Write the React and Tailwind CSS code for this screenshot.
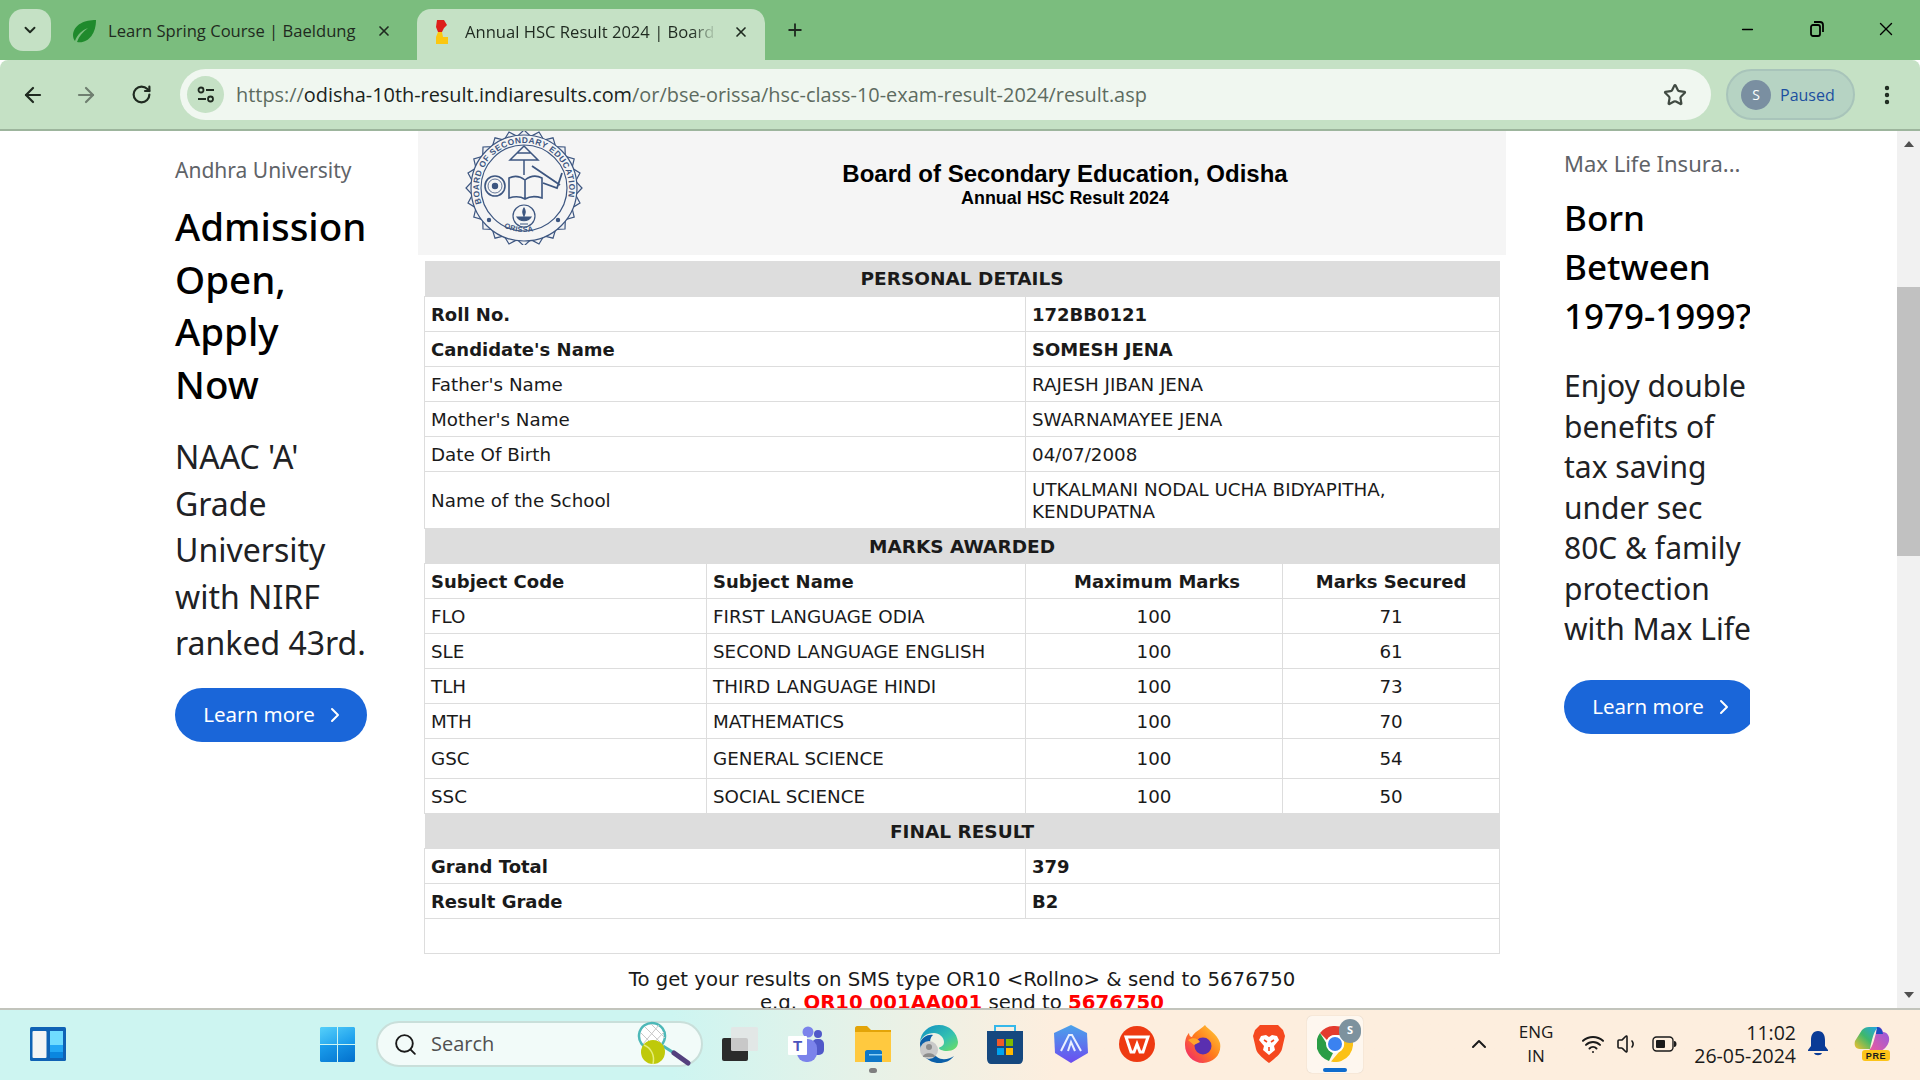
import { ChevronDown, ChevronRight, ChevronUp, X, Plus, ArrowLeft, ArrowRight, RotateCw, Star, MoreVertical, Minus, Search, Wifi, Volume1 } from 'lucide-react';

const personal = [
  { label: 'Roll No.', value: '172BB0121', bold: true },
  { label: "Candidate's Name", value: 'SOMESH JENA', bold: true },
  { label: "Father's Name", value: 'RAJESH JIBAN JENA' },
  { label: "Mother's Name", value: 'SWARNAMAYEE JENA' },
  { label: 'Date Of Birth', value: '04/07/2008' },
];

const marks = [
  { code: 'FLO', name: 'FIRST LANGUAGE ODIA', secured: 71, h: 'h-[35px]' },
  { code: 'SLE', name: 'SECOND LANGUAGE ENGLISH', secured: 61, h: 'h-[35px]' },
  { code: 'TLH', name: 'THIRD LANGUAGE HINDI', secured: 73, h: 'h-[35px]' },
  { code: 'MTH', name: 'MATHEMATICS', secured: 70, h: 'h-[35px]' },
  { code: 'GSC', name: 'GENERAL SCIENCE', secured: 54, h: 'h-[40px]' },
  { code: 'SSC', name: 'SOCIAL SCIENCE', secured: 50, h: 'h-[35px]' },
];

const cell = 'border border-[#dddddd] px-[6px] py-0 pt-[1px]';
const plainCell = 'border border-[#dddddd] px-[6px] py-0 pt-[2px]';

function SectionRow({ children }) {
  return (
    <tr className="h-[35px] bg-[#dddddd]">
      <td colSpan={4} className="p-0 pt-[2px] text-center text-[18.5px] font-bold">{children}</td>
    </tr>
  );
}

// seal drawn from the logo in the header
function Seal() {
  const points = [];
  for (let i = 0; i < 48; i++) {
    const r = i % 2 === 0 ? 58 : 52;
    const a = (i / 48) * Math.PI * 2;
    points.push(`${(59 + r * Math.cos(a)).toFixed(1)},${(57 + r * Math.sin(a)).toFixed(1)}`);
  }
  return (
    <svg width="118" height="114" viewBox="0 0 118 114" fill="none" stroke="#3d5680" strokeWidth="1.2">
      <polygon points={points.join(' ')} fill="#f1f2f4" />
      <circle cx="59" cy="57" r="53" fill="#f5f5f5" />
      <circle cx="59" cy="57" r="43" fill="#f5f5f5" />
      <defs>
        <path id="sealTop" d="M16.7 72.4 A45 45 0 1 1 101.3 72.4" />
        <path id="sealBottom" d="M38 96 A46 46 0 0 0 80 96" />
      </defs>
      <text fontSize="8.4" fontFamily="Liberation Sans, sans-serif" fontWeight="700" fill="#3d5680" stroke="none" letterSpacing="0.5">
        <textPath href="#sealTop" startOffset="0%">BOARD OF SECONDARY EDUCATION</textPath>
      </text>
      <text fontSize="7.5" fontFamily="Liberation Sans, sans-serif" fontWeight="700" fill="#3d5680" stroke="none" letterSpacing="0.3">
        <textPath href="#sealBottom" startOffset="2%">ORISSA</textPath>
      </text>
      <path d="M45 29 L59 15 L73 29 Z M52 22 H66 M59 29 V44" strokeWidth="1.5" />
      <path d="M44 67 V47 C50 44 55 45 60 49 C65 45 71 44 77 47 V67 C71 65 65 65 60 68 C55 65 50 65 44 67 Z M60 49 V68" strokeWidth="1.6" />
      <path d="M67 35 L95 54 M78 52 L92 57 L97 42" strokeWidth="1.8" />
      <circle cx="30" cy="55" r="10" strokeWidth="1.6" />
      <circle cx="30" cy="55" r="7" strokeWidth="0.8" />
      <circle cx="30" cy="55" r="2.6" fill="#3d5680" />
      <circle cx="59" cy="85" r="11" />
      <path d="M52 86 C55 91 63 91 66 86 Z M59 77 C61 80 60 83 59 85 C58 83 57 80 59 77 Z M55 93 H63" fill="#3d5680" />
      <circle cx="24" cy="89" r="1.6" fill="#3d5680" />
      <circle cx="93" cy="89" r="1.6" fill="#3d5680" />
    </svg>
  );
}

function LeafIcon() {
  return (
    <svg width="26" height="24" viewBox="0 0 26 24">
      <path d="M25 1 C14 1 3 5 2 16 C2 19 3 21 4 22 C6 16 11 11 17 9 C12 13 8 17 6 23 C17 25 25 15 25 1 Z" fill="#1f8a2c" />
    </svg>
  );
}

function FlagIcon() {
  return (
    <svg width="16" height="26" viewBox="0 0 16 26">
      <path d="M4 1 H11 L14 6 L11 9 L9 13 H5 L3 8 Z" fill="#dd1f1a" />
      <path d="M5 13 H9 L10 18 H15 V25 H3 V18 Z" fill="#fbc711" />
    </svg>
  );
}

function ChromeTabs() {
  return (
    <div className="flex h-[60px] bg-[#7bbd7e] text-[#1f2a20]">
      <div className="ml-[9px] mt-[9px] flex h-[42px] w-[42px] items-center justify-center rounded-[14px] bg-[#c5e1c5]">
        <ChevronDown size={18} strokeWidth={2.5} />
      </div>
      <div className="ml-[20px] flex h-[60px] w-[346px] items-center pt-[2px]">
        <LeafIcon />
        <span className="ml-[11px] w-[268px] whitespace-nowrap text-[16.6px]">Learn Spring Course | Baeldung</span>
        <X size={16} strokeWidth={2.5} />
      </div>
      <div className="mt-[9px] flex h-[51px] w-[348px] items-center rounded-t-[14px] bg-[#c5e1c5] pb-[5px] pl-[16px]">
        <FlagIcon />
        <span className="ml-[16px] w-[252px] overflow-hidden whitespace-nowrap text-[16.6px] [mask-image:linear-gradient(to_right,black_90%,transparent)]">Annual HSC Result 2024 | Board of Secondary</span>
        <X size={16} strokeWidth={2.5} className="ml-[16px]" />
      </div>
      <div className="ml-[20px] flex items-center">
        <Plus size={20} strokeWidth={2.2} />
      </div>
      <div className="ml-auto flex items-center pb-[2px] text-black">
        <div className="flex w-[69px] justify-center"><Minus size={17} strokeWidth={1.8} /></div>
        <div className="flex w-[69px] justify-center">
          <svg width="16" height="16" viewBox="0 0 16 16" fill="none" stroke="black" strokeWidth="1.8">
            <rect x="2" y="4" width="9" height="11" rx="2" />
            <path d="M5 1 H11 C13 1 14 2 14 4 V11" />
          </svg>
        </div>
        <div className="flex w-[69px] justify-center"><X size={22} strokeWidth={1.5} /></div>
      </div>
    </div>
  );
}

function AddressBar() {
  return (
    <div className="h-[71px] rounded-t-[8px] border-b-[2px] border-[#9db59d] bg-[#c5e1c5]">
      <div className="flex h-[69px] items-center text-[#1f2a20]">
        <div className="flex w-[180px] shrink-0 items-center">
          <div className="flex w-[66px] justify-center"><ArrowLeft size={24} strokeWidth={2.2} /></div>
          <div className="flex w-[40px] justify-center text-[#6f7f70]"><ArrowRight size={24} strokeWidth={2.2} /></div>
          <div className="flex w-[70px] justify-center"><RotateCw size={21} strokeWidth={2.5} /></div>
        </div>
        <div className="flex h-[51px] w-[1531px] items-center rounded-full bg-[#f0f7f0] pl-[7px]">
          <div className="flex h-[37px] w-[37px] items-center justify-center rounded-full bg-[#c5e1c5]">
            <svg width="20" height="20" viewBox="0 0 20 20" fill="none" stroke="#1f2a20" strokeWidth="1.8">
              <circle cx="5" cy="5" r="2.5" />
              <path d="M10 5 H18 M2 14 H10" />
              <circle cx="14.5" cy="14" r="2.5" />
            </svg>
          </div>
          <div className="ml-[12px] whitespace-nowrap text-[19.9px] text-[#5d6b60]">
            https://<span className="text-[#1a231c]">odisha-10th-result.indiaresults.com</span>/or/bse-orissa/hsc-class-10-exam-result-2024/result.asp
          </div>
          <div className="ml-auto mr-[24px] text-[#404a42]"><Star size={24} strokeWidth={2.2} /></div>
        </div>
        <div className="ml-[15px] flex h-[51px] w-[129px] items-center rounded-full border-[2px] border-[#a8c4ba] bg-[#b6d3c3] pl-[13px]">
          <div className="flex h-[30px] w-[30px] items-center justify-center rounded-full bg-[#7a8fa1] text-[14px] text-white">S</div>
          <span className="ml-[9px] text-[16px] text-[#1c4fa0]">Paused</span>
        </div>
        <div className="ml-[20px]"><MoreVertical size={24} strokeWidth={2.4} /></div>
      </div>
    </div>
  );
}

function LearnMore({ className }) {
  return (
    <div className={`flex h-[54px] items-center justify-center gap-[8px] rounded-full bg-[#1a66d9] pl-[8px] text-[20.5px] text-white ${className}`}>
      Learn more
      <ChevronRight size={24} strokeWidth={2} />
    </div>
  );
}

function LeftAd() {
  return (
    <div className="w-[418px] shrink-0 pl-[175px] pr-[40px] font-['Noto_Sans',sans-serif] text-[#202124]">
      <div className="mt-[22px] whitespace-nowrap text-[21px] leading-[34px] text-[#5f6368]">Andhra University</div>
      <div className="mt-[13px] text-[38.5px] font-medium leading-[52.5px] text-black">Admission<br />Open,<br />Apply<br />Now</div>
      <div className="mt-[24px] text-[32px] leading-[46.5px]">NAAC 'A'<br />Grade<br />University<br />with NIRF<br />ranked 43rd.</div>
      <LearnMore className="mt-[21px] w-[192px]" />
    </div>
  );
}

function RightAd() {
  return (
    <div className="w-[391px] shrink-0 pl-[58px] font-['Noto_Sans',sans-serif] text-[#202124]">
      <div className="w-[186px] overflow-hidden">
        <div className="w-[240px]">
          <div className="mt-[16px] text-[22px] leading-[32px] text-[#5f6368]">Max Life Insura...</div>
          <div className="mt-[14px] text-[35px] font-medium leading-[49px] text-black">Born<br />Between<br />1979-1999?</div>
          <div className="mt-[26px] text-[30px] leading-[40.5px]">Enjoy double<br />benefits of<br />tax saving<br />under sec<br />80C & family<br />protection<br />with Max Life</div>
          <LearnMore className="mt-[30px] w-[192px]" />
        </div>
      </div>
    </div>
  );
}

function ResultSheet() {
  return (
    <div className="h-full w-[1088px] shrink-0 overflow-hidden">
      <div className="flex h-[124px] items-start bg-[#f5f5f5]">
        <div className="ml-[47px] shrink-0"><Seal /></div>
        <div className="ml-[41px] flex w-[888px] flex-col items-center pt-[28px] font-['Liberation_Sans',sans-serif] font-bold text-black">
          <div className="text-[24px] leading-[30px]">Board of Secondary Education, Odisha</div>
          <div className="text-[17.9px] leading-[19px]">Annual HSC Result 2024</div>
        </div>
      </div>
      <div className="px-[6px] pt-[6px]">
        <table className="w-[1075px] table-fixed border-collapse font-['DejaVu_Sans',sans-serif] text-[18.3px] text-[#1a1a1a]">
          <colgroup>
            <col className="w-[282px]" />
            <col className="w-[319px]" />
            <col className="w-[257px]" />
            <col className="w-[217px]" />
          </colgroup>
          <tbody>
            <SectionRow>PERSONAL DETAILS</SectionRow>
            {personal.map(row => (
              <tr key={row.label} className={`h-[35px] ${row.bold ? 'text-[18px] font-bold' : ''}`}>
                <td colSpan={2} className={row.bold ? cell : plainCell}>{row.label}</td>
                <td colSpan={2} className={row.bold ? cell : plainCell}>{row.value}</td>
              </tr>
            ))}
            <tr className="h-[57px]">
              <td colSpan={2} className={plainCell}>Name of the School</td>
              <td colSpan={2} className={`${plainCell} leading-[22px]`}>UTKALMANI NODAL UCHA BIDYAPITHA, KENDUPATNA</td>
            </tr>
            <SectionRow>MARKS AWARDED</SectionRow>
            <tr className="h-[35px] text-[18px] font-bold">
              <td className={cell}>Subject Code</td>
              <td className={cell}>Subject Name</td>
              <td className={`${cell} pl-[12px] text-center`}>Maximum Marks</td>
              <td className={`${cell} text-center`}>Marks Secured</td>
            </tr>
            {marks.map(row => (
              <tr key={row.code} className={row.h}>
                <td className={plainCell}>{row.code}</td>
                <td className={plainCell}>{row.name}</td>
                <td className={`${plainCell} text-center`}>100</td>
                <td className={`${plainCell} text-center`}>{row.secured}</td>
              </tr>
            ))}
            <SectionRow>FINAL RESULT</SectionRow>
            <tr className="h-[35px] text-[18px] font-bold">
              <td colSpan={2} className={cell}>Grand Total</td>
              <td colSpan={2} className={cell}>379</td>
            </tr>
            <tr className="h-[35px] text-[18px] font-bold">
              <td colSpan={2} className={cell}>Result Grade</td>
              <td colSpan={2} className={cell}>B2</td>
            </tr>
            <tr className="h-[35px]"><td colSpan={4} className={cell}></td></tr>
          </tbody>
        </table>
      </div>
      <div className="mt-[14px] text-center font-['DejaVu_Sans',sans-serif] text-[19.7px] leading-[23px] text-[#1a1a1a]">
        <div>To get your results on SMS type OR10 &lt;Rollno&gt; &amp; send to 5676750</div>
        <div>e.g. <b className="text-[#ff0000]">OR10 001AA001</b> send to <b className="text-[#ff0000]">5676750</b></div>
      </div>
    </div>
  );
}

function Scrollbar() {
  return (
    <div className="flex h-full w-[23px] shrink-0 flex-col items-center bg-[#f1f1f1]">
      <svg width="10" height="6" viewBox="0 0 10 6" className="mt-[10px] shrink-0"><path d="M5 0 L10 6 H0 Z" fill="#505050" /></svg>
      <div className="mt-[140px] h-[269px] w-full shrink-0 bg-[#c1c1c1]"></div>
      <svg width="10" height="6" viewBox="0 0 10 6" className="mb-[10px] mt-auto shrink-0"><path d="M0 0 H10 L5 6 Z" fill="#505050" /></svg>
    </div>
  );
}

function WidgetsIcon() {
  return (
    <svg width="36" height="34" viewBox="0 0 36 34">
      <rect width="36" height="34" rx="1.5" fill="#0f62b5" />
      <rect x="2.5" y="4" width="14" height="27" rx="1" fill="#f4f4f4" />
      <rect x="20" y="4" width="13" height="14" fill="#6fdcff" />
      <rect x="20" y="18" width="13" height="7" fill="#22a7f5" />
      <rect x="20" y="25" width="13" height="6" fill="#0a86e0" />
    </svg>
  );
}

function StartIcon() {
  return (
    <svg width="35" height="35" viewBox="0 0 35 35">
      <defs>
        <linearGradient id="startTop" x1="0" y1="0" x2="1" y2="1"><stop offset="0%" stopColor="#55d0fa" /><stop offset="100%" stopColor="#1497ea" /></linearGradient>
        <linearGradient id="startBottom" x1="0" y1="0" x2="1" y2="1"><stop offset="0%" stopColor="#1ba0ee" /><stop offset="100%" stopColor="#0370cc" /></linearGradient>
      </defs>
      <path d="M1 0 H17 V17 H0 V1 Z M18 0 H34 L35 1 V17 H18 Z" fill="url(#startTop)" />
      <path d="M0 18 H17 V35 H1 L0 34 Z M18 18 H35 V34 L34 35 H18 Z" fill="url(#startBottom)" />
    </svg>
  );
}

function RacketIcon() {
  return (
    <svg width="54" height="48" viewBox="0 0 54 48">
      <ellipse cx="15" cy="16" rx="13" ry="13" transform="rotate(-35 15 16)" fill="#fff" stroke="#4db8b8" strokeWidth="2.5" />
      <path d="M8 7 L25 24 M14 4 L28 18 M4 13 L20 29 M22 5 L6 24 M27 12 L12 28" stroke="#c8c8c8" strokeWidth="1" />
      <path d="M26 26 L37 33" stroke="#4db8b8" strokeWidth="3" />
      <path d="M37 33 L51 43" stroke="#54407e" strokeWidth="5" strokeLinecap="round" />
      <circle cx="16" cy="32" r="12" fill="#bfc90a" />
      <path d="M7 25 C14 28 18 35 16 44" stroke="#e6ee7a" strokeWidth="1.5" fill="none" />
    </svg>
  );
}

function TaskViewIcon() {
  return (
    <svg width="37" height="34" viewBox="0 0 37 34">
      <rect x="0" y="11" width="26" height="23" rx="2" fill="#2b2b2b" />
      <rect x="9" y="0" width="27" height="24" rx="1.5" fill="#e4e4e4" fillOpacity="0.85" />
    </svg>
  );
}

function TeamsIcon() {
  return (
    <svg width="38" height="36" viewBox="0 0 38 36">
      <circle cx="30" cy="8" r="4" fill="#5059c9" />
      <rect x="24" y="13" width="12" height="16" rx="5" fill="#5059c9" />
      <circle cx="20" cy="6" r="5.5" fill="#7b83eb" />
      <rect x="9" y="13" width="20" height="23" rx="9" fill="#7b83eb" />
      <rect x="0" y="10" width="19" height="19" rx="1" fill="#fff" />
      <text x="9.5" y="25" textAnchor="middle" fontSize="15" fontWeight="700" fontFamily="Liberation Sans, sans-serif" fill="#4b53bc">T</text>
    </svg>
  );
}

function FolderIcon() {
  return (
    <svg width="36" height="36" viewBox="0 0 36 36">
      <path d="M0 2 C0 1 1 0 2 0 H12 L16 4 H36 V36 H0 Z" fill="#e3a408" />
      <path d="M0 6 H36 V36 H0 Z" fill="#ffc93f" />
      <path d="M12 26 C12 25 13 24 14 24 H27 C28 24 29 25 29 26 V36 H12 Z" fill="#0f78c8" transform="translate(-2 0)" />
      <rect x="14" y="28" width="13" height="1.5" fill="#8fd0f5" />
    </svg>
  );
}

function EdgeIcon() {
  return (
    <svg width="38" height="38" viewBox="0 0 38 38">
      <defs>
        <linearGradient id="edgeTop" x1="0" y1="0" x2="1" y2="1"><stop offset="0%" stopColor="#0f8ec4" /><stop offset="60%" stopColor="#35c2b0" /><stop offset="100%" stopColor="#72e05c" /></linearGradient>
      </defs>
      <path d="M0 18 C0 7 9 0 19 0 C30 0 37 8 38 17 C38 23 33 26 27 26 C22 26 19 24 19 23 C19 22 24 22 24 17 C24 12 19 8 14 8 C7 8 1 12 0 18 Z" fill="url(#edgeTop)" />
      <path d="M0 18 C2 12 8 9 13 10 C8 14 9 26 17 32 C22 36 30 34 34 31 C30 36 25 38 19 38 C8 38 0 29 0 18 Z" fill="#0b5fa8" />
      <circle cx="9" cy="25" r="9" fill="#c9c9c9" />
      <circle cx="9" cy="22" r="3" fill="#8c8c8c" />
      <path d="M3 32 C3 27 15 27 15 32 Z" fill="#8c8c8c" />
    </svg>
  );
}

function StoreIcon() {
  return (
    <svg width="36" height="40" viewBox="0 0 36 40">
      <path d="M8 8 V2 H28 V8" fill="none" stroke="#35b8ea" strokeWidth="2" />
      <path d="M0 7 H36 V35 C36 38 34 40 32 40 H4 C2 40 0 38 0 35 Z" fill="#15487f" />
      <rect x="10" y="15" width="7" height="7" fill="#f05a28" />
      <rect x="19" y="15" width="7" height="7" fill="#7fba00" />
      <rect x="10" y="24" width="7" height="7" fill="#00a4ef" />
      <rect x="19" y="24" width="7" height="7" fill="#ffb900" />
    </svg>
  );
}

function ArcIcon() {
  return (
    <svg width="34" height="38" viewBox="0 0 34 38">
      <defs>
        <linearGradient id="arcFill" x1="0" y1="0" x2="0" y2="1"><stop offset="0%" stopColor="#4aa3ea" /><stop offset="100%" stopColor="#6c4cf0" /></linearGradient>
      </defs>
      <path d="M17 0 L33 8 L34 28 L17 38 L1 28 L0 8 Z" fill="url(#arcFill)" />
      <path d="M7 26 L15 10 L18 10 L27 26 M14 26 L17 17 L21 26" fill="none" stroke="#e9efff" strokeWidth="2" />
    </svg>
  );
}

function WpsIcon() {
  return (
    <svg width="36" height="36" viewBox="0 0 36 36">
      <circle cx="18" cy="18" r="18" fill="#ee3a12" />
      <path d="M7 11 H29 L24 26 H21 L18 18 L15 26 H12 Z" fill="none" stroke="#fff" strokeWidth="3" />
    </svg>
  );
}

function FirefoxIcon() {
  return (
    <svg width="36" height="38" viewBox="0 0 36 38">
      <defs>
        <linearGradient id="foxFill" x1="1" y1="0" x2="0" y2="1"><stop offset="0%" stopColor="#ffd43a" /><stop offset="50%" stopColor="#ff7a1c" /><stop offset="100%" stopColor="#f0197a" /></linearGradient>
      </defs>
      <path d="M20 0 C22 4 32 8 35 18 C37 29 29 38 18 38 C8 38 0 30 0 20 C0 14 2 10 4 8 C4 11 6 12 7 12 C9 7 15 5 20 0 Z" fill="url(#foxFill)" />
      <circle cx="18" cy="21" r="8.5" fill="#5a2fb0" />
      <path d="M3 15 C8 12 13 13 15 17 L9 20 Z" fill="#ffa52c" />
    </svg>
  );
}

function BraveIcon() {
  return (
    <svg width="32" height="38" viewBox="0 0 32 38">
      <path d="M7 0 H25 L30 5 L32 11 L29 24 C28 29 20 35 16 38 C12 35 4 29 3 24 L0 11 L2 5 Z" fill="#f5481f" />
      <path d="M8 11 L13 10 L16 12 L19 10 L24 11 L26 15 L21 21 L22 25 L16 30 L10 25 L11 21 L6 15 Z" fill="#fff" />
      <path d="M11 15 L14 17 M21 15 L18 17 M16 22 V26" stroke="#f5481f" strokeWidth="1.6" />
    </svg>
  );
}

function ChromeIcon() {
  return (
    <svg width="36" height="36" viewBox="0 0 36 36">
      <path d="M18 0 A18 18 0 0 1 33.6 9 L18 9 A9 9 0 0 0 10 14 L3 7 A18 18 0 0 1 18 0 Z" fill="#e33b2e" />
      <path d="M3 7 L10.5 19 A9 9 0 0 0 16 27 L12 35 A18 18 0 0 1 3 7 Z" fill="#2a9d45" />
      <path d="M33.6 9 A18 18 0 0 1 14 35.6 L22 26 A9 9 0 0 0 25 12 Z" fill="#fbc116" />
      <circle cx="18" cy="18" r="9" fill="#fff" />
      <circle cx="18" cy="18" r="7" fill="#3b82f0" />
    </svg>
  );
}

function BatteryIcon() {
  return (
    <svg width="25" height="16" viewBox="0 0 25 16" fill="none">
      <rect x="1" y="1" width="20" height="14" rx="3.5" stroke="#1a1a1a" strokeWidth="1.4" />
      <rect x="4" y="4" width="9" height="8" rx="1" fill="#1a1a1a" />
      <path d="M22 5 C24 5 24.5 6.5 24.5 8 C24.5 9.5 24 11 22 11 Z" fill="#1a1a1a" />
    </svg>
  );
}

function CopilotIcon() {
  return (
    <svg width="36" height="34" viewBox="0 0 36 34">
      <defs>
        <linearGradient id="copLeft" x1="0" y1="1" x2="1" y2="0"><stop offset="0%" stopColor="#f6c02c" /><stop offset="50%" stopColor="#3fb86b" /><stop offset="100%" stopColor="#21a4e8" /></linearGradient>
        <linearGradient id="copRight" x1="0" y1="1" x2="1" y2="0"><stop offset="0%" stopColor="#f05a9a" /><stop offset="100%" stopColor="#8a5ce6" /></linearGradient>
      </defs>
      <path d="M8 3 C10 1 12 0 15 0 H24 C20 4 18 12 16 22 H6 C1 22 0 18 1 14 Z" fill="url(#copLeft)" />
      <path d="M24 0 C27 0 28 2 29 5 C33 5 36 9 35 14 C34 19 30 23 26 24 H14 C20 20 20 10 24 0 Z" fill="url(#copRight)" />
      <path d="M23 0 C26 0 28 2 29 7 H22 Z" fill="#1a4cc2" />
      <rect x="8" y="23" width="28" height="11" rx="3" fill="#fcc419" />
      <text x="22" y="32" textAnchor="middle" fontSize="9" fontWeight="700" fontFamily="Liberation Sans, sans-serif" fill="#1a1a1a" letterSpacing="0.6">PRE</text>
    </svg>
  );
}

function PinnedApps() {
  return (
    <div className="ml-[15px] flex items-center">
      <div className="flex w-[66px] justify-center"><TeamsIcon /></div>
      <div className="relative flex w-[66px] justify-center">
        <FolderIcon />
        <div className="absolute bottom-[-11px] h-[5px] w-[8px] rounded-full bg-[#7f7f7f]"></div>
      </div>
      <div className="flex w-[66px] justify-center"><EdgeIcon /></div>
      <div className="flex w-[66px] justify-center"><StoreIcon /></div>
      <div className="flex w-[66px] justify-center"><ArcIcon /></div>
      <div className="flex w-[66px] justify-center"><WpsIcon /></div>
      <div className="flex w-[66px] justify-center"><FirefoxIcon /></div>
      <div className="flex w-[66px] justify-center"><BraveIcon /></div>
      <div className="relative ml-[5px] flex h-[57px] w-[56px] items-center justify-center rounded-[5px] bg-white/50 shadow-[0_0_1px_rgba(0,0,0,0.25)]">
        <ChromeIcon />
        <div className="absolute right-[2px] top-[3px] flex h-[24px] w-[22px] items-center justify-center rounded-full bg-[#7d929e] text-[11px] font-bold text-white">S</div>
        <div className="absolute bottom-[1px] h-[4px] w-[24px] rounded-full bg-[#0f6cce]"></div>
      </div>
    </div>
  );
}

function Taskbar() {
  return (
    <div className="flex h-[72px] shrink-0 items-center border-t-[2px] border-[#c2c4bc] bg-gradient-to-r from-[#cdf5f1] from-35% to-[#fdeede] to-55% pb-[2px] font-['Open_Sans',sans-serif] text-[#1a1a1a]">
      <div className="ml-[30px]"><WidgetsIcon /></div>
      <div className="ml-[254px]"><StartIcon /></div>
      <div className="ml-[21px] flex h-[46px] w-[327px] items-center rounded-full border-[2px] border-[#c9dfda] bg-[#f2fbf9] pl-[15px]">
        <Search size={25} strokeWidth={1.8} />
        <span className="ml-[13px] text-[20px] text-[#505050]">Search</span>
        <div className="ml-auto mr-[10px]"><RacketIcon /></div>
      </div>
      <div className="ml-[19px]"><TaskViewIcon /></div>
      <PinnedApps />
      <ChevronUp size={24} strokeWidth={2} className="ml-[104px]" />
      <div className="ml-[13px] w-[64px] text-center text-[17px] leading-[24px]">ENG<br />IN</div>
      <Wifi size={24} strokeWidth={2} className="ml-[13px]" />
      <Volume1 size={24} strokeWidth={1.6} className="ml-[11px]" />
      <div className="ml-[12px]"><BatteryIcon /></div>
      <div className="ml-[14px] w-[105px] whitespace-nowrap text-right text-[19.5px] leading-[23px]">11:02<br />26-05-2024</div>
      <svg width="20" height="26" viewBox="0 0 20 26" className="ml-[12px]">
        <path d="M10 0 C15 0 17 4 17 9 V15 L20 19 V20 H0 V19 L3 15 V9 C3 4 5 0 10 0 Z M6 22 H14 C13 25 7 25 6 22 Z" fill="#0a3b96" />
      </svg>
      <div className="ml-[26px]"><CopilotIcon /></div>
    </div>
  );
}

export default function App() {
  return (
    <div className="flex h-[1080px] w-[1920px] flex-col overflow-hidden bg-white font-['Open_Sans',sans-serif]">
      <ChromeTabs />
      <AddressBar />
      <div className="flex min-h-0 flex-1 overflow-hidden">
        <LeftAd />
        <ResultSheet />
        <RightAd />
        <Scrollbar />
      </div>
      <Taskbar />
    </div>
  );
}
